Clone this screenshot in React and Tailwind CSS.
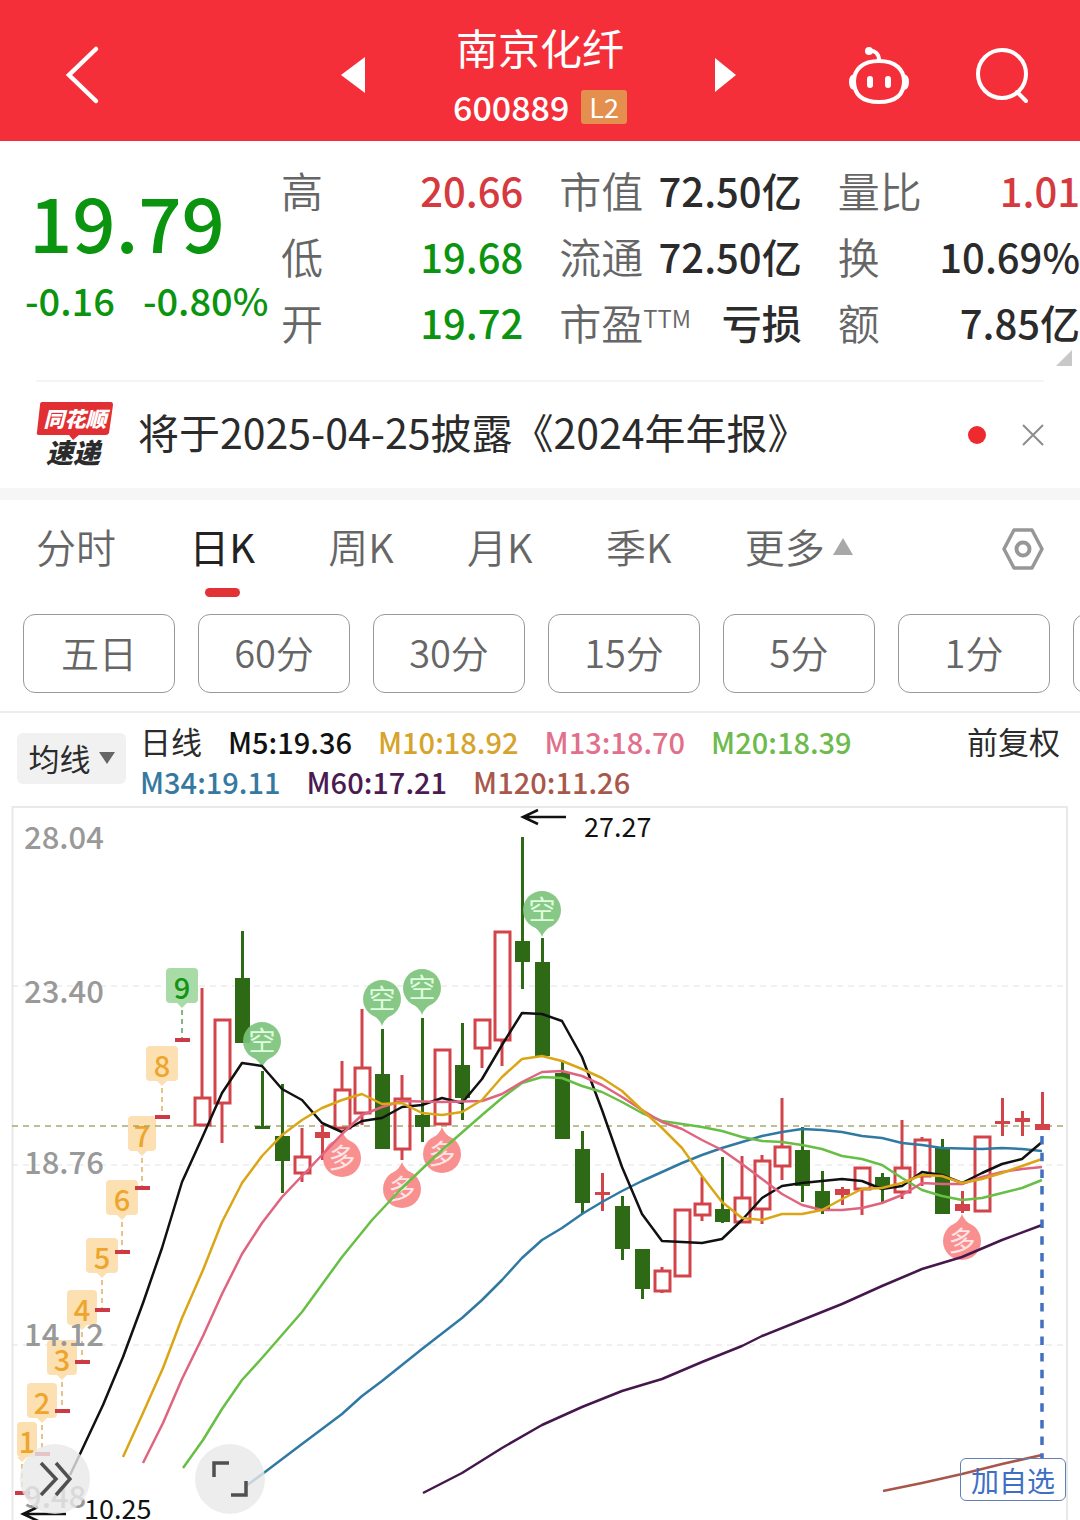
import React, { useState } from 'react';

const STATS = [
  [
    { label: '高', value: '20.66', tone: 'text-[#d63a3e]' },
    { label: '低', value: '19.68', tone: 'text-[#0b940f]' },
    { label: '开', value: '19.72', tone: 'text-[#0b940f]' }
  ],
  [
    { label: '市值', value: '72.50亿', tone: 'text-[#2b2b2b]' },
    { label: '流通', value: '72.50亿', tone: 'text-[#2b2b2b]' },
    { label: '市盈', sup: 'TTM', value: '亏损', tone: 'text-[#2b2b2b]' }
  ],
  [
    { label: '量比', value: '1.01', tone: 'text-[#d63a3e]' },
    { label: '换', value: '10.69%', tone: 'text-[#2b2b2b]' },
    { label: '额', value: '7.85亿', tone: 'text-[#2b2b2b]' }
  ]
];

const TABS = ['分时', '日K', '周K', '月K', '季K'];
const PERIODS = ['五日', '60分', '30分', '15分', '5分', '1分'];

const LEGEND = [
  { text: 'M5:19.36', tone: 'text-[#111111]' },
  { text: 'M10:18.92', tone: 'text-[#d6a42a]' },
  { text: 'M13:18.70', tone: 'text-[#e0708c]' },
  { text: 'M20:18.39', tone: 'text-[#6cbb4c]' },
  { text: 'M34:19.11', tone: 'text-[#3679a0]' },
  { text: 'M60:17.21', tone: 'text-[#4a1a50]' },
  { text: 'M120:11.26', tone: 'text-[#a8584a]' }
];

// x, kind, body top, body bottom, wick top, wick bottom
// kind: u = hollow (up), s = solid red, d = solid green
const CANDLES = [
  [202, 'u', 1097, 1125, 988, 1125],
  [222, 'u', 1019, 1103, 1019, 1143],
  [242, 'd', 978, 1043, 931, 1043],
  [262, 'd', 1126, 1129, 1071, 1129],
  [282, 'd', 1136, 1161, 1084, 1193],
  [302, 'u', 1156, 1173, 1128, 1182],
  [322, 's', 1132, 1138, 1125, 1160],
  [342, 'u', 1089, 1128, 1061, 1128],
  [362, 'u', 1067, 1113, 1009, 1125],
  [382, 'd', 1074, 1149, 1029, 1149],
  [402, 'u', 1098, 1149, 1075, 1160],
  [422, 'd', 1115, 1127, 1018, 1142],
  [442, 'u', 1049, 1124, 1049, 1124],
  [462, 'd', 1065, 1098, 1023, 1120],
  [482, 'u', 1019, 1048, 1019, 1068],
  [502, 'u', 931, 1040, 931, 1066],
  [522, 'd', 941, 962, 837, 989],
  [542, 'd', 962, 1056, 938, 1056],
  [562, 'd', 1073, 1139, 1060, 1139],
  [582, 'd', 1149, 1203, 1131, 1214],
  [602, 's', 1192, 1195, 1173, 1211],
  [622, 'd', 1206, 1249, 1196, 1260],
  [642, 'd', 1249, 1289, 1249, 1299],
  [662, 'u', 1270, 1291, 1267, 1293],
  [682, 'u', 1209, 1276, 1209, 1276],
  [702, 'u', 1203, 1215, 1177, 1221],
  [722, 'd', 1209, 1222, 1157, 1223],
  [742, 'u', 1197, 1222, 1156, 1222],
  [762, 'u', 1160, 1209, 1155, 1224],
  [782, 'u', 1146, 1166, 1098, 1180],
  [802, 'd', 1150, 1186, 1127, 1202],
  [822, 'd', 1191, 1210, 1171, 1214],
  [842, 's', 1189, 1195, 1187, 1205],
  [862, 'u', 1167, 1189, 1167, 1215],
  [882, 'd', 1177, 1188, 1173, 1203],
  [902, 'u', 1167, 1192, 1120, 1199],
  [922, 'u', 1139, 1176, 1137, 1186],
  [942, 'd', 1147, 1214, 1139, 1214],
  [962, 's', 1204, 1211, 1191, 1213],
  [982, 'u', 1136, 1211, 1136, 1211],
  [1002, 's', 1121, 1124, 1098, 1136],
  [1022, 's', 1118, 1122, 1111, 1136],
  [1042, 's', 1124, 1130, 1092, 1130]
];

// limit-up days counted 1..9: x, tag top, dash y, tag width
const STREAK = [
  [22, 1422, 1493, 20],
  [42, 1383, 1454, 30],
  [62, 1340, 1411, 30],
  [82, 1290, 1362, 30],
  [102, 1238, 1310, 32],
  [122, 1180, 1252, 32],
  [142, 1116, 1188, 28],
  [162, 1046, 1117, 32],
  [182, 968, 1040, 32]
];

const LINES = [
  {
    color: '#2f79a3',
    points:
      '246,1486 265,1472 302,1444 342,1414 362,1396 382,1381 422,1349 462,1318 482,1300 502,1280 522,1258 542,1240 562,1228 582,1214 602,1202 622,1191 642,1181 662,1172 682,1163 702,1155 722,1148 742,1142 762,1136 782,1132 802,1129 822,1130 842,1132 862,1136 882,1138 902,1143 922,1145 942,1148 982,1149 1002,1148 1022,1149 1042,1151'
  },
  {
    color: '#45174d',
    points:
      '423,1493 462,1473 502,1448 542,1425 582,1407 622,1391 662,1379 702,1362 742,1346 762,1336 802,1320 842,1304 882,1286 922,1269 962,1257 1002,1240 1042,1225'
  },
  { color: '#a9564a', points: '883,1491 922,1483 962,1474 1002,1464 1042,1455' },
  {
    color: '#111111',
    points:
      '70,1475 80,1454 103,1405 123,1357 143,1303 162,1248 182,1182 202,1138 222,1093 242,1063 262,1066 282,1089 302,1100 322,1123 342,1132 362,1121 382,1118 402,1107 422,1105 442,1098 462,1103 482,1079 502,1045 522,1013 542,1014 562,1021 582,1057 602,1110 622,1167 642,1214 662,1241 682,1242 702,1243 722,1239 742,1220 762,1198 782,1186 802,1183 822,1181 842,1179 862,1181 882,1189 902,1186 922,1172 942,1175 962,1183 982,1173 1002,1164 1022,1159 1042,1142'
  },
  {
    color: '#67bf45',
    points:
      '183,1468 203,1440 222,1409 242,1380 262,1358 302,1312 342,1257 372,1220 402,1188 442,1150 482,1115 502,1098 522,1083 542,1077 562,1078 582,1086 602,1092 622,1102 642,1113 662,1121 682,1124 702,1127 722,1131 742,1137 762,1141 782,1142 802,1145 822,1149 842,1156 862,1159 882,1165 902,1178 922,1190 942,1196 962,1200 982,1198 1002,1193 1022,1188 1042,1180'
  },
  {
    color: '#e0647f',
    points:
      '143,1463 163,1423 182,1379 203,1336 222,1294 242,1254 262,1223 282,1197 302,1176 322,1155 342,1134 362,1115 382,1107 402,1101 442,1102 482,1101 502,1094 522,1082 542,1072 562,1071 582,1076 602,1085 622,1097 642,1110 662,1122 682,1129 702,1140 722,1150 742,1164 762,1179 782,1194 802,1205 822,1210 842,1210 862,1208 882,1203 902,1195 922,1183 942,1184 962,1184 982,1177 1002,1172 1022,1169 1042,1167'
  },
  {
    color: '#dba616',
    points:
      '123,1457 143,1413 163,1368 182,1318 203,1270 222,1222 242,1183 262,1156 282,1135 302,1120 322,1108 342,1100 362,1094 382,1104 402,1103 422,1113 442,1115 462,1112 482,1100 502,1077 522,1059 542,1056 562,1061 582,1069 602,1078 622,1091 642,1110 662,1128 682,1148 702,1176 722,1202 742,1218 762,1220 782,1214 802,1214 822,1210 842,1199 862,1189 882,1188 902,1183 922,1175 942,1176 962,1183 982,1179 1002,1173 1022,1166 1042,1159'
  }
];

const PINS = [
  { x: 262, y: 1041, text: '空' },
  { x: 382, y: 999, text: '空' },
  { x: 422, y: 988, text: '空' },
  { x: 542, y: 910, text: '空' },
  { x: 342, y: 1158, text: '多' },
  { x: 402, y: 1189, text: '多' },
  { x: 442, y: 1154, text: '多' },
  { x: 962, y: 1241, text: '多' }
];

const AXIS = [
  { text: '28.04', y: 849 },
  { text: '23.40', y: 1003 },
  { text: '18.76', y: 1174 },
  { text: '14.12', y: 1346 },
  { text: '9.48', y: 1508 }
];

function Header() {
  return (
    <header className="flex h-[141px] items-center gap-[88px] bg-[#f42f39] px-[52px] pt-2 text-white">
      <div className="flex flex-1 items-center justify-between">
        <button type="button" aria-label="返回">
          <svg width="48" height="60" viewBox="0 0 48 60" fill="none" stroke="currentColor" strokeWidth="4.500" strokeLinecap="round">
            <path d="M44 4 L17 30 L44 56" />
          </svg>
        </button>
        <button type="button" aria-label="上一只">
          <svg width="24" height="36" viewBox="0 0 24 36" fill="currentColor">
            <path d="M24 0 V36 L0 18 Z" />
          </svg>
        </button>
      </div>
      <div className="flex flex-col items-center">
        <h1 className="text-[42px] leading-[56px]">南京化纤</h1>
        <div className="flex items-center gap-3 pt-2">
          <span className="text-[34px] leading-[48px] font-medium">600889</span>
          <span className="rounded-[3px] bg-[#e58f4e] px-2 text-[27px] leading-[34px]">L2</span>
        </div>
      </div>
      <div className="flex flex-1 items-center justify-between">
        <button type="button" aria-label="下一只">
          <svg width="21" height="34" viewBox="0 0 21 34" fill="currentColor">
            <path d="M0 0 V34 L21 17 Z" />
          </svg>
        </button>
        <div className="flex items-center gap-[66px]">
          <button type="button" aria-label="智能助手">
            <svg width="62" height="60" viewBox="0 0 62 60" fill="none" stroke="currentColor" strokeWidth="4">
              <path d="M21 6 C27 5 31 9 31 15" />
              <circle cx="21" cy="6" r="4" fill="currentColor" stroke="none" />
              <path d="M31 16 C48 16 56 25 56 36 C56 50 48 57 31 57 C14 57 6 50 6 36 C6 25 14 16 31 16 Z" />
              <path d="M6 29 Q1 30 1 37 Q1 44 6 45 Z M56 29 Q61 30 61 37 Q61 44 56 45 Z" fill="currentColor" stroke="none" />
              <path d="M22 34 V40 M40 34 V40" strokeWidth="6" strokeLinecap="round" />
            </svg>
          </button>
          <button type="button" aria-label="搜索">
            <svg width="52" height="56" viewBox="0 0 52 56" fill="none" stroke="currentColor" strokeWidth="4">
              <circle cx="26" cy="27" r="24" />
              <path d="M41 45 L50 54" strokeLinecap="round" />
            </svg>
          </button>
        </div>
      </div>
    </header>
  );
}

function Quote() {
  return (
    <section className="relative flex pt-4 pb-[25px] pl-[25px]">
      <div className="flex-[256] basis-0 pt-[13px] text-[#0b940f]">
        <div className="pl-1 text-[76px] leading-[100px] font-medium">19.79</div>
        <div className="flex gap-7 text-[38px] leading-[60px] font-medium whitespace-nowrap">
          <span>-0.16</span>
          <span>-0.80%</span>
        </div>
      </div>
      <div className="grid flex-[799] basis-0 grid-cols-3 gap-x-9">
        {STATS.map((column, i) => (
          <dl key={i}>
            {column.map((s) => (
              <div key={s.label} className="flex justify-between leading-[66px] whitespace-nowrap">
                <dt className="text-[42px] font-[350] text-[#666666]">
                  {s.label}
                  {s.sup ? <sup className="text-[24px]">{s.sup}</sup> : null}
                </dt>
                <dd className={`text-[40px] font-medium ${s.tone}`}>{s.value}</dd>
              </div>
            ))}
          </dl>
        ))}
      </div>
      <svg className="absolute right-2 bottom-[14px]" width="16" height="16" viewBox="0 0 16 16">
        <path d="M16 0 V16 H0 Z" fill="#c8c8c8" />
      </svg>
    </section>
  );
}

function NewsBar({ onClose }) {
  return (
    <section className="mx-9 flex h-[108px] items-center border-t-2 border-[#f4f4f4]">
      <svg width="78" height="68" viewBox="0 0 78 68" className="shrink-0 overflow-visible">
        <path d="M6 1 H75 Q77 1 77 4 L73 32 Q72 34 70 34 H43 L37 39 L33 34 H3 Q0 34 1 31 L4 4 Q4 1 6 1 Z" fill="#e12f33" />
        <text x="39" y="26" textAnchor="middle" fontSize="21" fontWeight="900" fontStyle="italic" fill="#ffffff">同花顺</text>
        <text x="37" y="62" textAnchor="middle" fontSize="27" fontWeight="900" fontStyle="italic" fill="#2b2b2b">速递</text>
      </svg>
      <a href="#news" className="ml-6 flex-1 pb-2 text-[41px] leading-[60px] text-[#2b2b2b]">将于2025-04-25披露《2024年年报》</a>
      <span className="size-[18px] rounded-full bg-[#ee2a2e]" />
      <button type="button" aria-label="关闭" onClick={onClose} className="ml-9">
        <svg width="22" height="22" viewBox="0 0 22 22" stroke="#8c8c8c" strokeWidth="2">
          <path d="M1 1 L21 21 M21 1 L1 21" />
        </svg>
      </button>
    </section>
  );
}

function PeriodTabs() {
  const [tab, setTab] = useState('日K');
  return (
    <nav className="border-b-2 border-[#ececec] pb-[18px]">
      <div className="flex h-[114px] items-start justify-between px-9 pt-4">
        {TABS.map((t) => (
          <button
            key={t}
            type="button"
            onClick={() => setTab(t)}
            className={t === tab ? 'flex flex-col items-center text-[40px] leading-[60px] text-[#222222]' : 'text-[40px] leading-[60px] font-[350] text-[#666666]'}
          >
            {t}
            {t === tab ? <span className="mt-3 h-[9px] w-[35px] rounded-full bg-[#e23236]" /> : null}
          </button>
        ))}
        <button type="button" className="mr-[76px] flex items-center gap-2 text-[40px] leading-[60px] font-[350] text-[#666666]">
          更多
          <svg width="20" height="17" viewBox="0 0 20 17">
            <path d="M10 0 L20 17 H0 Z" fill="#a8a8a8" />
          </svg>
        </button>
        <button type="button" aria-label="设置" className="pt-3">
          <svg width="42" height="42" viewBox="0 0 42 42" fill="none" stroke="#979797">
            <path d="M12 2 H30 L40 21 L30 40 H12 L2 21 Z" strokeWidth="3.500" strokeLinejoin="round" />
            <circle cx="21" cy="21" r="6.500" strokeWidth="4" />
          </svg>
        </button>
      </div>
      <div className="flex gap-[23px] overflow-hidden pl-[23px]">
        {PERIODS.map((p) => (
          <button key={p} type="button" className="h-[79px] w-[152px] shrink-0 rounded-xl border border-[#999999] pb-1 text-[38px] font-[350] text-[#666666]">
            {p}
          </button>
        ))}
        <button type="button" aria-label="更多周期" className="h-[79px] w-[152px] shrink-0 rounded-xl border border-[#999999]" />
      </div>
    </nav>
  );
}

function Legend() {
  return (
    <section className="flex items-start pt-2 pr-5 pb-[5px] pl-[17px] text-[31px] leading-[40px] text-[#2b2b2b]">
      <button type="button" className="mt-3 flex h-[51px] w-[109px] shrink-0 items-center justify-center gap-2 rounded-md bg-[#f1f1f1] pb-[2px]">
        均线
        <svg width="16" height="12" viewBox="0 0 16 12">
          <path d="M0 0 H16 L8 12 Z" fill="#666666" />
        </svg>
      </button>
      <div className="ml-[14px] flex flex-1 flex-wrap gap-x-[26px]">
        <span>日线</span>
        {LEGEND.map((l) => (
          <span key={l.text} className={`text-[29px] font-medium ${l.tone}`}>
            {l.text}
          </span>
        ))}
      </div>
      <span>前复权</span>
    </section>
  );
}

function Candle({ x, kind, top, bottom, high, low }) {
  const color = kind === 'd' ? '#2e6915' : '#d2444a';
  if (kind === 'u') {
    return (
      <g stroke={color} strokeWidth="3" fill="none">
        <path d={`M${x} ${high} V${top} M${x} ${bottom} V${low}`} />
        <rect x={x - 7} y={top + 1} width="15" height={bottom - top - 1} />
      </g>
    );
  }
  return (
    <g fill={color}>
      <rect x={x - 1} y={high} width="3" height={low - high} />
      <rect x={x - 7} y={top} width="15" height={bottom - top} />
    </g>
  );
}

function StreakTag({ n, x, top, y, width }) {
  const last = n === 9;
  const cx = n === 1 ? 27 : x;
  return (
    <g>
      <path d={`M${x} ${top + 42} V${y}`} stroke={last ? '#5e9e5e' : '#e0b060'} strokeDasharray="5 4" strokeWidth="1.500" />
      <rect x={x - 7} y={y - 2} width="15" height="4" fill="#cc3b45" />
      <rect x={cx - width / 2} y={top} width={width} height="35" rx="4" fill={last ? '#a9dba7' : '#fce0b2'} />
      <path d={`M${x - 5} ${top + 35} H${x + 5} L${x} ${top + 40} Z`} fill={last ? '#a9dba7' : '#fce0b2'} />
      <text x={cx} y={top + 31} textAnchor="middle" fontSize="29" fontWeight="500" fill={last ? '#139413' : '#eda52c'}>
        {n}
      </text>
    </g>
  );
}

function Pin({ x, y, text }) {
  const short = text === '空';
  const dir = short ? 1 : -1;
  const color = short ? '#7bc37b' : '#f98585';
  return (
    <g opacity="0.9">
      <circle cx={x} cy={y} r="19" fill={color} />
      <path d={`M${x - 12} ${y + dir * 14} Q${x - 2} ${y + dir * 20} ${x} ${y + dir * 27} Q${x + 2} ${y + dir * 20} ${x + 12} ${y + dir * 14} Z`} fill={color} />
      <text x={x} y={y + 10} textAnchor="middle" fontSize="27" fill={short ? '#dcffdc' : '#ffe3e3'}>
        {text}
      </text>
    </g>
  );
}

function Chart() {
  return (
    <section className="relative">
      <svg viewBox="0 806 1080 714" className="block w-full" fill="none">
        <path d="M12.500 1520 V807 H1067 V1520" stroke="#e9e9e9" strokeWidth="2" />
        <path d="M12 986 H1067 M12 1165 H1067 M12 1345 H1067" stroke="#e2e2e2" strokeDasharray="6 5" />
        {STREAK.map(([x, top, y, width], i) => (
          <StreakTag key={x} n={i + 1} x={x} top={top} y={y} width={width} />
        ))}
        {AXIS.map((a) => (
          <text key={a.text} x="24" y={a.y} fontSize="31" fontWeight="500" fill="#999999">
            {a.text}
          </text>
        ))}
        <path d="M12 1126 H1067" stroke="#a9a973" strokeDasharray="6 5" strokeWidth="1.500" />
        {CANDLES.map(([x, kind, top, bottom, high, low]) => (
          <Candle key={x} x={x} kind={kind} top={top} bottom={bottom} high={high} low={low} />
        ))}
        {PINS.map((p) => (
          <Pin key={p.x} {...p} />
        ))}
        {LINES.map((l) => (
          <polyline key={l.color} points={l.points} stroke={l.color} strokeWidth="2.500" strokeLinejoin="round" />
        ))}
        <path d="M1042 1136 V1459" stroke="#4270c0" strokeWidth="3.500" strokeDasharray="8.500 8.200" />
        <path d="M566 817 H524 M538 810 L523 817 L538 824" stroke="#111111" strokeWidth="2.500" />
        <text x="584" y="837" fontSize="27" fill="#111111">27.27</text>
        <path d="M66 1514 H24 M38 1507 L23 1514 L38 1521" stroke="#111111" strokeWidth="2.500" />
        <text x="84" y="1519" fontSize="27" fill="#111111">10.25</text>
      </svg>
      <button type="button" aria-label="展开" className="absolute bottom-[6px] left-5 flex size-[70px] items-center justify-center rounded-full bg-[#e8e8e8]/80">
        <svg width="34" height="36" viewBox="0 0 34 36" fill="none" stroke="#505050" strokeWidth="3.500">
          <path d="M3 2 L18 18 L3 34 M18 2 L32 18 L18 34" />
        </svg>
      </button>
      <button type="button" aria-label="全屏" className="absolute bottom-[6px] left-[195px] flex size-[70px] items-center justify-center rounded-full bg-[#e8e8e8]/80">
        <svg width="36" height="36" viewBox="0 0 36 36" fill="none" stroke="#505050" strokeWidth="3.500">
          <path d="M2 16 V2 H17 M34 20 V34 H19" />
        </svg>
      </button>
      <button type="button" className="absolute right-[14px] bottom-[19px] h-[43px] w-[106px] rounded-md border border-[#5f7fb8] text-[28px] leading-[40px] text-[#3f6fc4]">
        加自选
      </button>
    </section>
  );
}

export default function App() {
  const [newsOpen, setNewsOpen] = useState(true);
  return (
    <main className="overflow-hidden bg-white font-['Noto_Sans_CJK_SC',sans-serif]">
      <Header />
      <Quote />
      {newsOpen ? <NewsBar onClose={() => setNewsOpen(false)} /> : null}
      <div className="h-3 bg-[#f6f6f6]" />
      <PeriodTabs />
      <Legend />
      <Chart />
    </main>
  );
}
